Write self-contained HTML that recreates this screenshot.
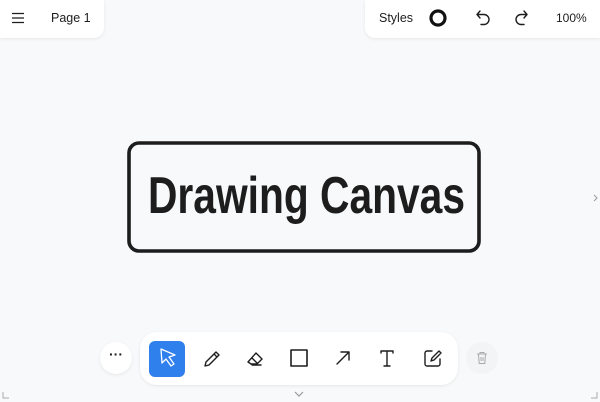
<!DOCTYPE html>
<html><head><meta charset="utf-8"><style>
html,body{margin:0;padding:0;width:600px;height:402px;overflow:hidden;background:#f8f9fa;font-family:"Liberation Sans",sans-serif;position:relative}
.panel{position:absolute;background:#fff;box-shadow:0 1px 3px rgba(0,0,0,.08)}
.t{position:absolute;font-size:12.5px;color:#1d1d1d}
</style></head><body>
<div class="panel" style="left:0;top:0;width:104px;height:38px;border-radius:0 0 10px 0"></div>
<svg style="position:absolute;left:11px;top:12px" width="14" height="12"><path d="M1 1.5h12M1 6h12M1 10.5h12" stroke="#1d1d1d" stroke-width="1.3"/></svg>
<div class="t" style="left:51px;top:11px">Page 1</div>

<div class="panel" style="left:365px;top:0;width:235px;height:38px;border-radius:0 0 0 10px"></div>
<div class="t" style="left:379px;top:11px">Styles</div>
<svg style="position:absolute;left:428px;top:9px" width="20" height="20"><circle cx="10" cy="9" r="7" fill="none" stroke="#111" stroke-width="3.2"/></svg>
<svg style="position:absolute;left:475px;top:9px" width="18" height="20"><path d="M5 2L2 5.5 5 9M2 5.5h7a5 5 0 0 1 0 10H6" fill="none" stroke="#1d1d1d" stroke-width="1.4" stroke-linecap="round" stroke-linejoin="round"/></svg>
<svg style="position:absolute;left:513px;top:9px" width="18" height="20"><path d="M11 2L14 5.5 11 9M14 5.5H8a5 5 0 0 0 0 10h3" fill="none" stroke="#1d1d1d" stroke-width="1.4" stroke-linecap="round" stroke-linejoin="round"/></svg>
<div class="t" style="left:556px;top:11px;font-size:12px">100%</div>

<svg style="position:absolute;left:0;top:0" width="600" height="402">
<rect x="129" y="143" width="350" height="108" rx="10" fill="none" stroke="#1d1d1d" stroke-width="3.6"/>
<text x="148" y="213" textLength="317" lengthAdjust="spacingAndGlyphs" font-family="Liberation Sans" font-weight="bold" font-size="52" fill="#1d1d1d">Drawing Canvas</text>
<path d="M594 195l3 3-3 3" fill="none" stroke="#999" stroke-width="1"/>
<path d="M295 392l4 4 4-4" fill="none" stroke="#999" stroke-width="1.2"/>
<path d="M3 392v6h6M597 392v6h-6" fill="none" stroke="#aaa" stroke-width="1"/>
</svg>

<div class="panel" style="left:100px;top:342px;width:32px;height:32px;border-radius:50%"></div>
<div style="position:absolute;left:100px;top:346px;width:32px;text-align:center;font-size:14px;font-weight:bold;color:#1d1d1d">···</div>
<div class="panel" style="left:466px;top:342px;width:32px;height:32px;border-radius:50%;background:#f3f4f5;box-shadow:none"></div>
<svg style="position:absolute;left:476px;top:351px" width="12" height="14"><path d="M1 3h10M4 3V1.5h4V3M2.5 3l.7 9.5h5.6L9.5 3M5 6v4M7 6v4" fill="none" stroke="#aaa" stroke-width="1"/></svg>

<div class="panel" style="left:140px;top:332px;width:318px;height:53px;border-radius:17px"></div>
<div style="position:absolute;left:149px;top:341px;width:36px;height:36px;border-radius:6px;background:#2f80ed"></div>
<svg style="position:absolute;left:0;top:0" width="600" height="402" fill="none" stroke="#1d1d1d" stroke-width="1.4" stroke-linejoin="round" stroke-linecap="round">
<path d="M161 349l14 6-6 2 5 7-3 2-5-7-4 4z" stroke="#fff" stroke-width="1.3"/>
<path d="M205 366l1-4 10-10 3 3-10 10z M214 354l3 3"/>
<path d="M248 362l8-9 6 6-5 5h-6z M252 358l5 5 M252 365h9"/>
<rect x="291" y="350" width="16" height="16" stroke-width="1.6"/>
<path d="M337 364l12-12 M341 352h8v8"/>
<path d="M381 353v-2h12v2 M387 351v15 M384 366h6" stroke-width="1.4"/>
<path d="M432 351h-5a2 2 0 0 0-2 2v11a2 2 0 0 0 2 2h11a2 2 0 0 0 2-2v-5 M431 361l1-3 7-7 2 2-7 7z"/>
</svg>
</body></html>
